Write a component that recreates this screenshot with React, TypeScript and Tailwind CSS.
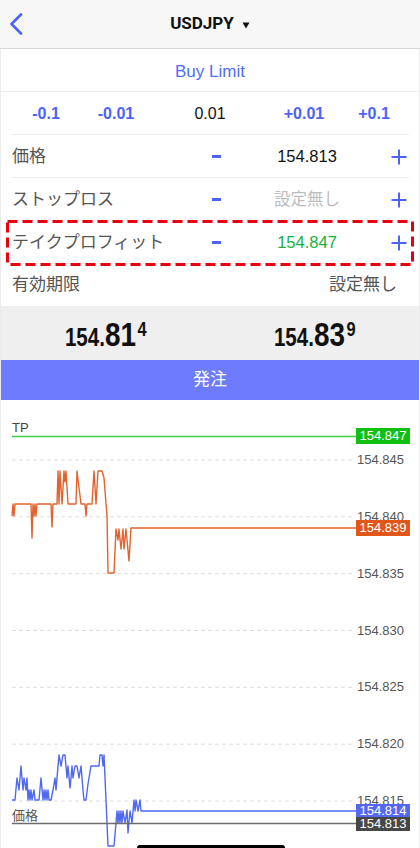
import React from "react";

const BLUE = "#4b63f6";

function Plus() {
  return (
    <svg width="16" height="16" viewBox="0 0 16 16">
      <line x1="8" y1="0.5" x2="8" y2="15.5" stroke={BLUE} strokeWidth="2" />
      <line x1="0.5" y1="8" x2="15.5" y2="8" stroke={BLUE} strokeWidth="2" />
    </svg>
  );
}

function Row({ label, value, valueClass }: { label: string; value: string; valueClass: string }) {
  return (
    <div className="h-[43px] mx-[10px] border-b border-[#ececec] flex items-center pt-[1px]">
      <div className="w-[180px] text-[17px] text-[#555] pl-[1px]">{label}</div>
      <div className="w-[50px] flex justify-center">
        <div className="w-[9px] h-[3px] bg-[#4b63f6]" />
      </div>
      <div className={"w-[132px] text-center text-[16.5px] " + valueClass}>{value}</div>
      <div className="flex-1 flex justify-end pr-[2px]">
        <Plus />
      </div>
    </div>
  );
}

function Price({ a, b, c }: { a: string; b: string; c: string }) {
  return (
    <div className="flex justify-center">
      <div className="inline-block scale-x-[0.82] origin-center font-bold text-[#111] leading-none whitespace-nowrap">
        <span className="text-[25px]">{a}</span>
        <span className="text-[34px]">{b}</span>
        <span className="text-[20px] ml-[2px] align-[10px]">{c}</span>
      </div>
    </div>
  );
}

const grid = [
  { y: 460, t: "154.845" },
  { y: 516.8, t: "154.840" },
  { y: 573.7, t: "154.835" },
  { y: 630.5, t: "154.830" },
  { y: 687.3, t: "154.825" },
  { y: 744.2, t: "154.820" },
  { y: 801, t: "154.815" },
];

const orange =
  "M11,516 L12,504 L13,516 L14,504 L30,504 L31,538 L32,504 L33,516 L34,504 L35,516 L36,504 L50,504 L51,527 L52,504 L56,504 L57,471 L58,504 L59,471 L61,504 L63,471 L64,482 L65,471 L67,504 L75,504 L76,471 L80,504 L84,504 L85,516 L86,504 L91,504 L93,471 L95,504 L97,471 L101,471 L103,478 L106,516 L107,573 L113,573 L115,529 L117,540 L118,529 L120,549 L122,529 L123,549 L125,529 L128,561 L130,528 L355,528";

const blue =
  "M11,800 L14,800 L16,778 L18,790 L20,766 L22,790 L23,778 L25,790 L26,778 L27,800 L28,790 L29,800 L30,790 L31,800 L33,790 L34,800 L38,800 L40,778 L42,800 L43,790 L44,800 L45,790 L46,800 L47,790 L48,800 L50,800 L52,790 L54,778 L55,790 L56,778 L58,755 L60,766 L62,755 L64,755 L66,778 L67,766 L69,788 L70,778 L71,766 L72,778 L74,766 L76,766 L78,778 L80,766 L82,790 L83,800 L85,800 L87,784 L88,778 L90,766 L98,766 L99,755 L101,755 L102,766 L103,755 L105,800 L107,846 L113,846 L115,823 L116,811 L117,823 L118,811 L119,823 L120,811 L121,823 L122,811 L124,823 L126,810 L127,833 L129,811 L131,823 L133,800 L134,811 L135,800 L137,811 L139,800 L140,811 L355,811";

export default function App() {
  return (
    <div
      className="w-[420px] h-[848px] overflow-hidden bg-white flex flex-col"
      style={{ fontFamily: '"Liberation Sans", "Noto Sans CJK JP", sans-serif' }}
    >
      {/* Header */}
      <div className="h-[49px] shrink-0 bg-[#f7f7f7] border-b border-[#d6d6d6] flex items-center">
        <div className="w-[40px] pl-[9px] flex items-center">
          <svg width="16" height="22" viewBox="0 0 16 22">
            <path d="M12,1.5 L2.5,11 L12,20.5" fill="none" stroke={BLUE} strokeWidth="2.6" strokeLinecap="round" strokeLinejoin="round" />
          </svg>
        </div>
        <div className="flex-1 flex justify-center items-center pr-[40px]">
          <span className="text-[17px] font-bold text-[#111]" style={{ fontFamily: "Roboto, sans-serif" }}>
            USDJPY
          </span>
          <svg className="ml-[8px] mt-[3px]" width="8" height="7" viewBox="0 0 8 7">
            <polygon points="0.5,0.5 7.5,0.5 4,6.5" fill="#111" />
          </svg>
        </div>
      </div>

      <div className="flex-1 flex flex-col border-x border-[#ececec]">
        {/* Buy Limit */}
        <div className="h-[43px] shrink-0 border-b border-[#efefef] flex items-center justify-center pt-[3px]">
          <span className="text-[17px] text-[#4f6ef7]">Buy Limit</span>
        </div>

        {/* Steps */}
        <div className="h-[43px] shrink-0 mx-[10px] border-b border-[#ececec] flex items-center text-[16px] pt-[2px]">
          <div className="w-[70px] text-center font-bold text-[#4b63f6]">-0.1</div>
          <div className="w-[70px] text-center font-bold text-[#4b63f6]">-0.01</div>
          <div className="w-[118px] text-center text-[#111]">0.01</div>
          <div className="w-[70px] text-center font-bold text-[#4b63f6]">+0.01</div>
          <div className="w-[70px] text-center font-bold text-[#4b63f6]">+0.1</div>
        </div>

        <Row label="価格" value="154.813" valueClass="text-[#111]" />
        <Row label="ストップロス" value="設定無し" valueClass="text-[#bdbdbd]" />
        <div className="relative">
          <Row label="テイクプロフィット" value="154.847" valueClass="text-[#17b141]" />
          <svg className="absolute left-[5px] -top-[1px]" width="408" height="46" viewBox="0 0 408 46">
            <rect x="1.5" y="1.5" width="405" height="43" fill="none" stroke="#e8000f" strokeWidth="3" strokeDasharray="10 5" />
          </svg>
        </div>

        {/* Expiry */}
        <div className="h-[42px] shrink-0 mx-[10px] flex items-center justify-between">
          <span className="text-[17px] text-[#555] pl-[1px]">有効期限</span>
          <span className="text-[17px] text-[#555] pr-[12px]">設定無し</span>
        </div>

        {/* Bid / Ask */}
        <div className="h-[54px] shrink-0 bg-[#efefef] grid grid-cols-2 items-center pt-[2px]">
          <Price a="154." b="81" c="4" />
          <Price a="154." b="83" c="9" />
        </div>

        {/* Order button */}
        <div className="h-[40px] shrink-0 bg-[#6c7cfd] flex items-center justify-center">
          <span className="text-[17px] text-white">発注</span>
        </div>

        {/* Chart */}
        <div className="relative flex-1 overflow-hidden bg-white">
          <svg className="absolute left-0 top-0" width="420" height="448" viewBox="0 400 420 448">
            {grid.map((g) => (
              <line key={g.t} x1="11" y1={g.y} x2="352" y2={g.y} stroke="#dedede" strokeWidth="1" strokeDasharray="4 3" />
            ))}
            <line x1="11" y1="436.5" x2="356" y2="436.5" stroke="#3fcf3f" strokeWidth="1.5" />
            <path d={orange} fill="none" stroke="#e2632f" strokeWidth="1.4" strokeLinejoin="round" />
            <path d={blue} fill="none" stroke="#5068f0" strokeWidth="1.4" strokeLinejoin="round" />
            <line x1="11" y1="823.5" x2="356" y2="823.5" stroke="#6b6b6b" strokeWidth="1.5" />
          </svg>

          {grid.map((g) => (
            <div
              key={g.t}
              className="absolute right-[15px] h-[16px] leading-[16px] text-[13px] text-[#555]"
              style={{ top: g.y - 400 - 8 }}
            >
              {g.t}
            </div>
          ))}

          <div className="absolute left-[11px] top-[20px] text-[13px] leading-[16px] text-[#444]">TP</div>
          <div className="absolute left-[11px] top-[408px] text-[13px] leading-[16px] text-[#555]">価格</div>

          <div className="absolute left-[355px] top-[28px] w-[54px] h-[16px] bg-[#11bf11] text-white text-[13px] leading-[16px] text-center">
            154.847
          </div>
          <div className="absolute left-[355px] top-[120px] w-[54px] h-[16px] bg-[#e0561b] text-white text-[13px] leading-[16px] text-center">
            154.839
          </div>
          <div className="absolute left-[355px] top-[404px] w-[54px] h-[14px] bg-[#5467f2] text-white text-[13px] leading-[14px] text-center">
            154.814
          </div>
          <div className="absolute left-[355px] top-[417px] w-[54px] h-[14px] bg-[#474747] text-white text-[13px] leading-[14px] text-center">
            154.813
          </div>

          <div className="absolute left-[136px] top-[445px] w-[148px] h-[6px] rounded-full bg-black" />
        </div>
      </div>
    </div>
  );
}
